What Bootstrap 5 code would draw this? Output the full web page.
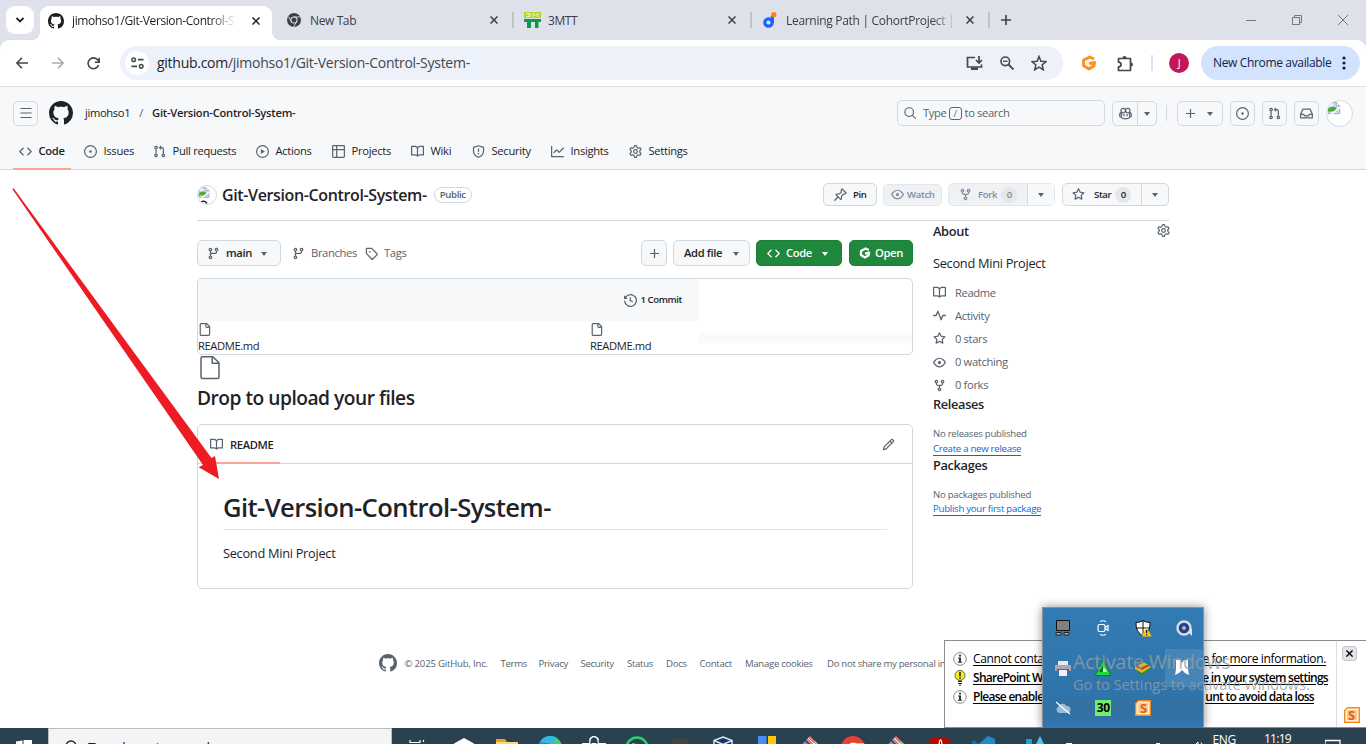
<!DOCTYPE html>
<html lang="en">
<head>
<meta charset="utf-8">
<title>jimohso1/Git-Version-Control-System-</title>
<link rel="stylesheet" href="https://cdn.jsdelivr.net/npm/bootstrap@5.3.0/dist/css/bootstrap.min.css">
<style>
:root{--gh-line:#d1d9e0;--gh-fg:#1f2328;--gh-muted:#59636e}
body{width:1366px;height:744px;overflow:hidden;position:relative;background:#fff;color:var(--gh-fg);font-family:"Open Sans","Noto Sans",sans-serif;font-size:11.2px;line-height:16px;letter-spacing:-.35px;white-space:nowrap}
svg{display:block;flex:none;fill:currentColor}
.ln{fill:none}
.ln:not([stroke]){stroke:currentColor}
.i13{width:13px;height:13px}
.sb{font-weight:600}
/* browser chrome */
.tabstrip{height:40px;background:#dee1e9;color:#3c4043;font-size:12px;letter-spacing:-.39px}
.tabmenu{width:28px;height:28px;margin:6px 6px 0;background:#fff;border-radius:9px;color:#1f1f1f}
.tab-on{width:232px;height:34px;margin-top:6px;background:#fff;border-radius:9px 9px 0 0;padding:0 12px 5px 8px;color:#1f1f1f;position:relative}
.tab-on:before,.tab-on:after{content:"";position:absolute;bottom:0;width:9px;height:9px}
.tab-on:before{left:-9px;background:radial-gradient(circle at 0 0,transparent 9px,#fff 9.5px)}
.tab-on:after{right:-9px;background:radial-gradient(circle at 100% 0,transparent 9px,#fff 9.5px)}
.tab-off{width:238px;padding:0 12px 0 15px}
.tab-mid{width:236px;padding:0 14px 0 10px}
.sep{width:2px;height:16px;background:#c2c2c5}
.tabtitle{overflow:hidden;flex:1}
.fade-end{-webkit-mask-image:linear-gradient(90deg,#000 85%,transparent);mask-image:linear-gradient(90deg,#000 85%,transparent)}
.toolbar{height:47px;background:#fff;border-bottom:1px solid #dfe2e0;color:#444746;border-radius:9px 9px 0 0}
.tabstrip-wrap{background:#dee1e9}
.omnibox{width:943px;height:34px;border-radius:17px;background:#ecf1fa;padding:0 16px 0 5px;font-size:14px;letter-spacing:-.27px;color:#44474c}
.siteinfo{width:24px;height:24px;background:#fff;border-radius:50%}
.update{width:159px;height:34px;border-radius:17px;background:#d3e3fd;color:#0b2350;font-size:12px;padding:0 14px 0 12px;letter-spacing:-.35px}
.avatar-j{width:20px;height:20px;border-radius:50%;background:#c2185b;color:#fff;font-size:11px}
/* site header */
.ghhead{height:83px;background:#f6f8fa;border-bottom:1px solid var(--gh-line)}
.ghrow{height:26px;margin-top:13px;padding:0 13px}
.sq{height:25px;border:1px solid var(--gh-line);border-radius:5px;color:var(--gh-muted);display:flex;align-items:center;justify-content:center}
.sq25{width:25px}
.searchbox{width:208px;height:26px;border:1px solid var(--gh-line);border-radius:5px;padding:0 6px;color:var(--gh-muted)}
.slash{border:1px solid var(--gh-muted);border-radius:3px;width:13px;height:13px;line-height:11px;font-size:9.6px;text-align:center;margin:0 3px 0 2px}
.caret{width:0;height:0;border:3.2px solid transparent;border-top:4px solid var(--gh-muted);border-bottom:0;position:relative;top:.5px}
.avatar-b{border-radius:50%;border:1px solid var(--gh-line);background:#fff;overflow:hidden}
.ghnav{display:grid;grid-template-columns:65px 69px 103px 76px 79px 61px 79px 78px 80px;height:38px;margin:6px 0 0 19px;align-items:center;letter-spacing:-.3px}
.ghnav>a{display:flex;align-items:center;gap:6.5px;height:38px;color:var(--gh-fg);text-decoration:none}
.ghnav svg{color:var(--gh-muted)}
.ghnav .on{width:58px;margin-left:-6px;padding-left:6px;border-bottom:2px solid #fda393;border-top:2px solid transparent;font-weight:600}
/* repository */
.repo{width:972px;margin-left:197px}
.titlebar{height:51px;border-bottom:1px solid var(--gh-line);padding-bottom:1px}
.titletext{font-size:16px;font-weight:600;letter-spacing:-.37px}
.pill{border:1px solid var(--gh-line);border-radius:9px;font-size:9.6px;font-weight:600;color:var(--gh-muted);height:16px;line-height:14px;width:38px;text-align:center}
.b{border:1px solid var(--gh-line);border-radius:5px;background:#f6f8fa;display:flex;align-items:center;font-weight:600}
.b svg{color:var(--gh-muted)}
.b.sm{height:23px;font-size:9.6px}
.b.dim{color:#818b98;background:#eff2f5;border-color:#e3e7eb}
.b.dim svg{color:#818b98}
.b.md{height:26px}
.b.green{background:#1f883d;border-color:#1a7f37;color:#fff}
.b.green svg{color:#fff}
.green .caret{border-top-color:#fff}
.count{width:16px;height:16px;line-height:16px;text-align:center;border-radius:8px;background:#e4e7eb;margin-left:4px}
.split{border-left:1px solid var(--gh-line);height:100%;width:27px;display:flex;align-items:center;justify-content:center}
.leftcol{width:716px}
.rightcol{width:236px}
.filebox{height:77px;border:1px solid var(--gh-line);border-radius:5px;overflow:hidden;margin-top:12px;display:grid;grid-template-columns:392px 109px 1fr;grid-template-rows:42px 34px;letter-spacing:-.39px}
.filehead{grid-column:1/3;background:#f6f8fa;border-radius:0 5px 0 0}
.skel{height:10px;background:#f9fafb;margin-top:12px}
.h-drop{font-size:19.2px;line-height:26px;font-weight:600;letter-spacing:-.5px;margin:5px 0 0}
.readme{height:165px;border:1px solid var(--gh-line);border-radius:5px;margin-top:13px}
.readme-bar{height:39px;border-bottom:1px solid var(--gh-line);padding:0 17px 0 12px}
.readme-tab{height:40px;border-bottom:2px solid #fda393;width:70px;padding-top:3px}
.readme h1{font-size:25.6px;line-height:32px;font-weight:600;letter-spacing:-.58px;border-bottom:1px solid #dfe4e9;margin:28px 25px 0;height:38px}
.big{font-size:12.8px;letter-spacing:-.29px}
.muted{color:var(--gh-muted)}
.tiny{font-size:9.6px;line-height:14px;letter-spacing:-.26px}
.side-h{font-size:12.8px;font-weight:600;line-height:18px;margin:0}
.side-l{display:flex;align-items:center;gap:9px;height:23px;color:var(--gh-muted)}
.ul{color:#0969da;text-decoration:none;border-bottom:1px solid #0969da;display:inline-block;height:14px}
.foot{position:absolute;left:379px;top:654px;height:18px;font-size:9.6px;letter-spacing:-.3px;color:var(--gh-muted);display:grid;grid-template-columns:25.5px 96px 38px 42px 46.5px 39px 33.5px 45.5px 82px 130px;align-items:center}
.foot span{padding-top:1px}
.note{position:absolute;left:944px;top:640px;width:423px;height:88px;background:#fff;border:1px solid #8c8c8c;font-size:12px;color:#000}
.note .ntext{width:392px;border-right:1px solid #ddd;padding:8px 7px 0 8px}
.nrow{height:19px;display:flex;align-items:center;gap:6px}
.nrow>div{display:flex;justify-content:space-between;text-decoration:underline;text-underline-offset:2px}
.nrow .sb{letter-spacing:-.72px}
.w1{width:353px}.w2{width:355px}.w3{width:341px}
.nclose{width:15px;height:15px;margin:5px 0 0 5px;background:#e3e4e8;border:1px solid #c5c6cc;border-radius:3px}
.tray{position:absolute;left:1042px;top:607px;width:162px;height:121px;background:linear-gradient(#327bb4,#2f75ab 70%,#336f9f 85%,#3079b2);border:1px solid #8a9298;border-bottom:0;box-shadow:0 0 9px rgba(0,0,0,.45);display:grid;grid-template-columns:repeat(4,40.2px);grid-template-rows:repeat(3,40px);place-items:center}
.tray .hot{background:#4585b8;width:38px;height:38px;display:grid;place-items:center}
.n30{background:#6ef06e;color:#000;font-weight:700;width:16px;height:16px;line-height:16px;text-align:center;font-size:12px}
.wm{position:absolute;left:1073px;top:651px;color:rgba(150,158,164,.8)}
.wm1{font-size:19.5px;line-height:22px;letter-spacing:-.16px}
.wm2{font-size:14.6px;line-height:22px;letter-spacing:-.07px}
.task{position:absolute;left:0;top:728px;width:1366px;height:16px;overflow:hidden;background:#2a4150;color:#fff}
.tsearch{width:344px;height:40px;background:#f3f4f5;border:1px solid #bcbcbc;color:#222;font-size:14px;letter-spacing:-.1px;padding:11px 0 0 15px;gap:10px;margin-right:7px}
.ticons{display:grid;grid-template-columns:repeat(15,43.25px);justify-items:center;padding-top:8px}
.clock{font-size:12px}
.arrow{position:absolute;left:0;top:180px}
</style>
</head>
<body>
<svg class="d-none">
<symbol id="gh" viewBox="0 0 16 16"><path d="M8 0c4.42 0 8 3.58 8 8a8.013 8.013 0 0 1-5.45 7.59c-.4.08-.55-.17-.55-.38 0-.27.01-1.13.01-2.2 0-.75-.25-1.23-.54-1.48 1.78-.2 3.65-.88 3.65-3.95 0-.88-.31-1.59-.82-2.15.08-.2.36-1.02-.08-2.12 0 0-.67-.22-2.2.82-.64-.18-1.32-.27-2-.27-.68 0-1.36.09-2 .27-1.53-1.03-2.2-.82-2.2-.82-.44 1.1-.16 1.92-.08 2.12-.51.56-.82 1.28-.82 2.15 0 3.06 1.86 3.75 3.64 3.95-.23.2-.44.55-.51 1.07-.46.21-1.61.55-2.33-.66-.15-.24-.6-.83-1.23-.82-.67.01-.27.38.01.53.34.19.73.9.82 1.13.16.45.68 1.31 2.69.94 0 .67.01 1.3.01 1.49 0 .21-.15.45-.55.38A7.995 7.995 0 0 1 0 8c0-4.42 3.58-8 8-8Z"/></symbol>
<symbol id="code" viewBox="0 0 16 16"><path d="m11.28 3.22 4.25 4.25a.75.75 0 0 1 0 1.06l-4.25 4.25a.749.749 0 0 1-1.275-.326.749.749 0 0 1 .215-.734L13.94 8l-3.72-3.72a.749.749 0 0 1 .326-1.275.749.749 0 0 1 .734.215Zm-6.56 0a.751.751 0 0 1 1.042.018.751.751 0 0 1 .018 1.042L2.06 8l3.72 3.72a.749.749 0 0 1-.326 1.275.749.749 0 0 1-.734-.215L.47 8.53a.75.75 0 0 1 0-1.06Z"/></symbol>
<symbol id="issue" viewBox="0 0 16 16"><path d="M8 9.5a1.5 1.5 0 1 0 0-3 1.5 1.5 0 0 0 0 3Z"/><path d="M8 0a8 8 0 1 1 0 16A8 8 0 0 1 8 0ZM1.5 8a6.5 6.5 0 1 0 13 0 6.5 6.5 0 0 0-13 0Z"/></symbol>
<symbol id="pr" viewBox="0 0 16 16"><path d="M1.5 3.25a2.25 2.25 0 1 1 3 2.122v5.256a2.251 2.251 0 1 1-1.5 0V5.372A2.25 2.25 0 0 1 1.5 3.25Zm5.677-.177L9.573.677A.25.25 0 0 1 10 .854V2.5h1A2.5 2.5 0 0 1 13.5 5v5.628a2.251 2.251 0 1 1-1.5 0V5a1 1 0 0 0-1-1h-1v1.646a.25.25 0 0 1-.427.177L7.177 3.427a.25.25 0 0 1 0-.354ZM3.75 2.5a.75.75 0 1 0 0 1.5.75.75 0 0 0 0-1.5Zm0 9.5a.75.75 0 1 0 0 1.5.75.75 0 0 0 0-1.5Zm8.25.75a.75.75 0 1 0 1.5 0 .75.75 0 0 0-1.5 0Z"/></symbol>
<symbol id="play" viewBox="0 0 16 16"><path d="M8 0a8 8 0 1 1 0 16A8 8 0 0 1 8 0ZM1.5 8a6.5 6.5 0 1 0 13 0 6.5 6.5 0 0 0-13 0Zm4.879-2.773 4.264 2.559a.25.25 0 0 1 0 .428l-4.264 2.559A.25.25 0 0 1 6 10.559V5.442a.25.25 0 0 1 .379-.215Z"/></symbol>
<symbol id="tbl" viewBox="0 0 16 16"><path d="M0 1.75C0 .784.784 0 1.75 0h12.5C15.216 0 16 .784 16 1.75v12.5A1.75 1.75 0 0 1 14.25 16H1.75A1.75 1.75 0 0 1 0 14.25ZM6.5 6.5v8h7.75a.25.25 0 0 0 .25-.25V6.5Zm8-1.5V1.75a.25.25 0 0 0-.25-.25H6.5V5Zm-13 1.5v7.75c0 .138.112.25.25.25H5v-8ZM5 5V1.5H1.75a.25.25 0 0 0-.25.25V5Z"/></symbol>
<symbol id="book" viewBox="0 0 16 16"><path d="M0 1.75A.75.75 0 0 1 .75 1h4.253c1.227 0 2.317.59 3 1.501A3.743 3.743 0 0 1 11.006 1h4.245a.75.75 0 0 1 .75.75v10.5a.75.75 0 0 1-.75.75h-4.507a2.25 2.25 0 0 0-1.591.659l-.622.621a.75.75 0 0 1-1.06 0l-.622-.621A2.25 2.25 0 0 0 5.258 13H.75a.75.75 0 0 1-.75-.75Zm7.251 10.324.004-5.073-.002-2.253A2.25 2.25 0 0 0 5.003 2.5H1.5v9h3.757a3.75 3.75 0 0 1 1.994.574ZM8.755 4.75l-.004 7.322a3.752 3.752 0 0 1 1.992-.572H14.5v-9h-3.495a2.25 2.25 0 0 0-2.25 2.25Z"/></symbol>
<symbol id="shield" viewBox="0 0 16 16"><path fill="none" stroke="currentColor" stroke-width="1.5" stroke-linejoin="round" d="M8 .9 14.2 2.9V7c0 3.900-2.200 6.600-6.200 8.100C4 13.600 1.800 10.900 1.800 7V2.900Z"/><path d="M7.250 4.200h1.500v4.300h-1.500z"/><circle cx="8" cy="10.700" r="1"/></symbol>
<symbol id="graph" viewBox="0 0 16 16"><path d="M1.5 1.75V13.5h13.75a.75.75 0 0 1 0 1.5H.75a.75.75 0 0 1-.75-.75V1.75a.75.75 0 0 1 1.5 0Zm14.28 2.53-5.25 5.25a.75.75 0 0 1-1.06 0L7 7.06 4.28 9.78a.751.751 0 0 1-1.042-.018.751.751 0 0 1-.018-1.042l3.25-3.25a.75.75 0 0 1 1.06 0L10 7.94l4.72-4.72a.751.751 0 0 1 1.042.018.751.751 0 0 1 .018 1.042Z"/></symbol>
<symbol id="gear" viewBox="0 0 16 16"><path d="M8 0a8.2 8.2 0 0 1 .701.031C9.444.095 9.99.645 10.16 1.29l.288 1.107c.018.066.079.158.212.224.231.114.454.243.668.386.123.082.233.09.299.071l1.103-.303c.644-.176 1.392.021 1.82.63.27.385.506.792.704 1.218.315.675.111 1.422-.364 1.891l-.814.806c-.049.048-.098.147-.088.294.016.257.016.515 0 .772-.01.147.038.246.088.294l.814.806c.475.469.679 1.216.364 1.891a7.977 7.977 0 0 1-.704 1.217c-.428.61-1.176.807-1.82.63l-1.102-.302c-.067-.019-.177-.011-.3.071a5.909 5.909 0 0 1-.668.386c-.133.066-.194.158-.211.224l-.29 1.106c-.168.646-.715 1.196-1.458 1.26a8.006 8.006 0 0 1-1.402 0c-.743-.064-1.289-.614-1.458-1.26l-.289-1.106c-.018-.066-.079-.158-.212-.224a5.738 5.738 0 0 1-.668-.386c-.123-.082-.233-.09-.299-.071l-1.103.303c-.644.176-1.392-.021-1.82-.63a8.12 8.12 0 0 1-.704-1.218c-.315-.675-.111-1.422.363-1.891l.815-.806c.05-.048.098-.147.088-.294a6.214 6.214 0 0 1 0-.772c.01-.147-.038-.246-.088-.294l-.815-.806C.635 6.045.431 5.298.746 4.623a7.92 7.92 0 0 1 .704-1.217c.428-.61 1.176-.807 1.82-.63l1.102.302c.067.019.177.011.3-.071.214-.143.437-.272.668-.386.133-.066.194-.158.211-.224l.29-1.106C6.009.645 6.556.095 7.299.03 7.53.01 7.764 0 8 0Zm-.571 1.525c-.036.003-.108.036-.137.146l-.289 1.105c-.147.561-.549.967-.998 1.189-.173.086-.34.183-.5.29-.417.278-.97.423-1.529.27l-1.103-.303c-.109-.03-.175.016-.195.045-.22.312-.412.644-.573.99-.014.031-.021.11.059.19l.815.806c.411.406.562.957.53 1.456a4.709 4.709 0 0 0 0 .582c.032.499-.119 1.05-.53 1.456l-.815.806c-.081.08-.073.159-.059.19.162.346.353.677.573.989.02.03.085.076.195.046l1.102-.303c.56-.153 1.113-.008 1.53.27.161.107.328.204.501.29.447.222.85.629.997 1.189l.289 1.105c.029.109.101.143.137.146a6.6 6.6 0 0 0 1.142 0c.036-.003.108-.036.137-.146l.289-1.105c.147-.561.549-.967.998-1.189.173-.086.34-.183.5-.29.417-.278.97-.423 1.529-.27l1.103.303c.109.029.175-.016.195-.045.22-.313.411-.644.573-.99.014-.031.021-.11-.059-.19l-.815-.806c-.411-.406-.562-.957-.53-1.456a4.709 4.709 0 0 0 0-.582c-.032-.499.119-1.05.53-1.456l.815-.806c.081-.08.073-.159.059-.19a6.464 6.464 0 0 0-.573-.989c-.02-.03-.085-.076-.195-.046l-1.102.303c-.56.153-1.113.008-1.53-.27a4.44 4.44 0 0 0-.501-.29c-.447-.222-.85-.629-.997-1.189l-.289-1.105c-.029-.11-.101-.143-.137-.146a6.6 6.6 0 0 0-1.142 0ZM11 8a3 3 0 1 1-6 0 3 3 0 0 1 6 0ZM9.5 8a1.5 1.5 0 1 0-3.001.001A1.5 1.5 0 0 0 9.5 8Z"/></symbol>
<symbol id="branch" viewBox="0 0 16 16"><path d="M9.5 3.25a2.25 2.25 0 1 1 3 2.122V6A2.5 2.5 0 0 1 10 8.5H6a1 1 0 0 0-1 1v1.128a2.251 2.251 0 1 1-1.5 0V5.372a2.25 2.25 0 1 1 1.5 0v1.836A2.493 2.493 0 0 1 6 7h4a1 1 0 0 0 1-1v-.628A2.25 2.25 0 0 1 9.5 3.25Zm-6 0a.75.75 0 1 0 1.5 0 .75.75 0 0 0-1.5 0Zm8.25-.75a.75.75 0 1 0 0 1.5.75.75 0 0 0 0-1.5ZM4.25 12a.75.75 0 1 0 0 1.5.75.75 0 0 0 0-1.5Z"/></symbol>
<symbol id="fork" viewBox="0 0 16 16"><path d="M5 5.372v.878c0 .414.336.75.75.75h4.5a.75.75 0 0 0 .75-.75v-.878a2.25 2.25 0 1 1 1.5 0v.878a2.25 2.25 0 0 1-2.25 2.25h-1.5v2.128a2.251 2.251 0 1 1-1.5 0V8.5h-1.5A2.25 2.25 0 0 1 3.5 6.25v-.878a2.25 2.25 0 1 1 1.5 0ZM5 3.25a.75.75 0 1 0-1.5 0 .75.75 0 0 0 1.5 0Zm6.75.75a.75.75 0 1 0 0-1.5.75.75 0 0 0 0 1.5Zm-3 8.75a.75.75 0 1 0-1.5 0 .75.75 0 0 0 1.5 0Z"/></symbol>
<symbol id="tag" viewBox="0 0 16 16"><path d="M1 7.775V2.75C1 1.784 1.784 1 2.75 1h5.025c.464 0 .91.184 1.238.513l6.25 6.25a1.75 1.75 0 0 1 0 2.474l-5.026 5.026a1.75 1.75 0 0 1-2.474 0l-6.25-6.25A1.752 1.752 0 0 1 1 7.775Zm1.5 0c0 .066.026.13.073.177l6.25 6.25a.25.25 0 0 0 .354 0l5.025-5.025a.25.25 0 0 0 0-.354l-6.25-6.25a.25.25 0 0 0-.177-.073H2.75a.25.25 0 0 0-.25.25ZM6 5a1 1 0 1 1 0 2 1 1 0 0 1 0-2Z"/></symbol>
<symbol id="star" viewBox="0 0 16 16"><path d="M8 .25a.75.75 0 0 1 .673.418l1.882 3.815 4.21.612a.75.75 0 0 1 .416 1.279l-3.046 2.97.719 4.192a.751.751 0 0 1-1.088.791L8 12.347l-3.766 1.98a.75.75 0 0 1-1.088-.79l.72-4.194L.818 6.374a.75.75 0 0 1 .416-1.28l4.21-.611L7.327.668A.75.75 0 0 1 8 .25Zm0 2.445L6.615 5.5a.75.75 0 0 1-.564.41l-3.097.45 2.24 2.184a.75.75 0 0 1 .216.664l-.528 3.084 2.769-1.456a.75.75 0 0 1 .698 0l2.77 1.456-.53-3.084a.75.75 0 0 1 .216-.664l2.24-2.183-3.096-.45a.75.75 0 0 1-.564-.41L8 2.694Z"/></symbol>
<symbol id="eye" viewBox="0 0 16 16"><path d="M8 2c1.981 0 3.671.992 4.933 2.078 1.27 1.091 2.187 2.345 2.637 3.023a1.62 1.62 0 0 1 0 1.798c-.45.678-1.367 1.932-2.637 3.023C11.67 13.008 9.981 14 8 14c-1.981 0-3.671-.992-4.933-2.078C1.797 10.83.88 9.576.43 8.898a1.62 1.62 0 0 1 0-1.798c.45-.677 1.367-1.931 2.637-3.022C4.33 2.992 6.019 2 8 2ZM1.679 7.932a.12.12 0 0 0 0 .136c.411.622 1.241 1.75 2.366 2.717C5.176 11.758 6.527 12.5 8 12.5c1.473 0 2.825-.742 3.955-1.715 1.124-.967 1.954-2.096 2.366-2.717a.12.12 0 0 0 0-.136c-.412-.621-1.242-1.75-2.366-2.717C10.824 4.242 9.473 3.5 8 3.5c-1.473 0-2.825.742-3.955 1.715-1.124.967-1.954 2.096-2.366 2.717ZM8 10a2 2 0 1 1-.001-3.999A2 2 0 0 1 8 10Z"/></symbol>
<symbol id="file" viewBox="0 0 16 16"><path d="M2 1.75C2 .784 2.784 0 3.75 0h6.586c.464 0 .909.184 1.237.513l2.914 2.914c.329.328.513.773.513 1.237v9.586A1.75 1.75 0 0 1 13.25 16h-9.5A1.75 1.75 0 0 1 2 14.25Zm1.75-.25a.25.25 0 0 0-.25.25v12.5c0 .138.112.25.25.25h9.5a.25.25 0 0 0 .25-.25V6h-2.75A1.75 1.75 0 0 1 9 4.25V1.5Zm6.75.062V4.25c0 .138.112.25.25.25h2.688l-.011-.013-2.914-2.914-.013-.011Z"/></symbol>
<symbol id="pencil" viewBox="0 0 16 16"><path d="M11.013 1.427a1.75 1.75 0 0 1 2.474 0l1.086 1.086a1.75 1.75 0 0 1 0 2.474l-8.61 8.61c-.21.21-.47.364-.756.445l-3.251.93a.75.75 0 0 1-.927-.928l.929-3.25c.081-.286.235-.547.445-.758l8.61-8.61Zm.176 4.823L9.75 4.81l-6.286 6.287a.253.253 0 0 0-.064.108l-.558 1.953 1.953-.558a.253.253 0 0 0 .108-.064Zm1.238-3.763a.25.25 0 0 0-.354 0L10.811 3.75l1.439 1.44 1.263-1.263a.25.25 0 0 0 0-.354Z"/></symbol>
<symbol id="history" viewBox="0 0 16 16"><path d="m.427 1.927 1.215 1.215a8.002 8.002 0 1 1-1.6 5.685.75.75 0 1 1 1.493-.154 6.5 6.5 0 1 0 1.18-4.458l1.358 1.358A.25.25 0 0 1 3.896 6H.25A.25.25 0 0 1 0 5.75V2.104a.25.25 0 0 1 .427-.177ZM7.75 4a.75.75 0 0 1 .75.75v2.992l2.028.812a.75.75 0 0 1-.557 1.392l-2.5-1A.751.751 0 0 1 7 8.25v-3.5A.75.75 0 0 1 7.75 4Z"/></symbol>
<symbol id="pulse" viewBox="0 0 16 16"><path fill="none" stroke="currentColor" stroke-width="1.6" stroke-linejoin="round" stroke-linecap="round" d="M.8 8h3L6 2.800l4 10.400L12 8h3.200"/></symbol>
<symbol id="pin" viewBox="0 0 16 16"><path fill="none" stroke="currentColor" stroke-width="1.5" stroke-linejoin="round" stroke-linecap="round" d="M.9 15.100 5.200 10.800M9.900 1.100l5 5-1.200 1.100-2.500.6-1.900 2-.3 3.600-.9.6L2.600 8.500l.4-.9 3.700-.4 2-1.900.4-2.900Z"/></symbol>
<symbol id="copilot" viewBox="0 0 16 16"><path fill="none" stroke="currentColor" stroke-width="1.5" d="M8 3.200C7.400 1.300 3.200.9 2.700 3c-.3 1.600-.2 3.600 1.100 4 2 .5 4.200 0 4.200-3.800 0 3.800 2.200 4.300 4.200 3.800 1.300-.4 1.400-2.400 1.100-4C12.800.9 8.600 1.300 8 3.200M2.400 6.500C1.200 7.300.9 8.200.9 9.200v2.300c2 2 4.500 3 7.100 3s5.100-1 7.100-3V9.200c0-1-.3-1.900-1.500-2.700M3 7v5M13 7v5"/><path d="M5.300 8.500h1.500v3H5.300zM9.200 8.500h1.500v3H9.200z"/></symbol>
<symbol id="inbox" viewBox="0 0 16 16"><path fill="none" stroke="currentColor" stroke-width="1.500" stroke-linejoin="round" d="M3.500 2.700h9L15.200 9v4.300H.8V9ZM.8 9h3.700l1.300 2h4.400l1.300-2h3.700"/></symbol>
<symbol id="mag" viewBox="0 0 16 16"><path fill="none" stroke="currentColor" stroke-width="1.500" stroke-linecap="round" d="M6.900 1a5.800 5.800 0 1 0 0 11.600A5.800 5.800 0 1 0 6.900 1M11.200 11.200l4 4"/></symbol>
<symbol id="x" viewBox="0 0 8 8"><path fill="none" stroke="currentColor" stroke-width="1.500" d="m.5.5 7 7m0-7-7 7"/></symbol>
<symbol id="broken" viewBox="0 0 16 16"><path fill="#c9dcf8" stroke="#9b9b9b" d="M1.500 1.500h9l4 4v9h-13z"/><path fill="#fff" stroke="#9b9b9b" d="M10.500 1.500v4h4"/><path fill="#4fa834" d="M1 12c0-4 3-5.500 6-5.500S12 9 12 12z"/><circle cx="5" cy="4.500" r="1.500" fill="#fff"/><path stroke="#fff" stroke-width="2" d="m4 16 11-9"/></symbol>
<symbol id="gp" viewBox="0 0 16 16"><path fill="none" stroke="currentColor" stroke-width="3" stroke-linejoin="round" d="M13 4 8.800 2 2.600 5.200v5.600L8 13.900l4.900-3L13.500 7.500 8 8.800"/></symbol>
<symbol id="shot" viewBox="0 0 16 16"><path fill="#fff1de" stroke="#f28c1e" stroke-width="1.400" d="M3.500.7h11.800v14.600H.7V3.500z"/><path fill="#f79a2e" d="M3 3h10v10H3z" opacity=".45"/></symbol>
<symbol id="info" viewBox="0 0 14 14"><circle cx="7" cy="7" r="6.300" fill="#fff" stroke="#888"/><path fill="#333" d="M6 2.800h2v1.800H6zM5 5.500h3v4.200h1.200v1.100H4.800V9.700H6V6.600H5z"/></symbol>
</svg>

<!-- tab strip -->
<div class="tabstrip d-flex align-items-center">
  <div class="tabmenu d-flex align-items-center justify-content-center align-self-start"><svg width="8" height="6" viewBox="0 0 8 6"><path class="ln" stroke-width="1.800" d="m.5 1 3.500 3.500L7.500 1"/></svg></div>
  <div class="tab-on d-flex align-items-center">
    <svg width="16" height="16"><use href="#gh"/></svg>
    <span class="tabtitle fade-end ms-2 me-3">jimohso1/Git-Version-Control-S</span>
    <svg width="8" height="8"><use href="#x"/></svg>
  </div>
  <div class="tab-off d-flex align-items-center">
    <svg width="14" height="14" viewBox="0 0 16 16"><circle cx="8" cy="8" r="8"/><circle cx="8" cy="8" r="3.500" fill="none" stroke="#dee1e9" stroke-width="1.200"/><path stroke="#dee1e9" d="M8 4.500h7M5 9.800 1.500 4M11 9.800 7.500 16"/></svg>
    <span class="tabtitle" style="margin-left:9px;padding-top:1px">New Tab</span><svg width="8" height="8"><use href="#x"/></svg>
  </div>
  <div class="sep" style="margin-left:2px"></div>
  <div class="tab-mid d-flex align-items-center">
    <svg width="17" height="16" viewBox="0 0 17 16"><path fill="#b7d433" d="M0 0h17v6H0z"/><path fill="none" stroke="#eaf5b0" d="M2 1.500h4v3H2M4 3h2M9 5.500v-4l2.500 2 2.500-2v4"/><path fill="#0b9a4c" d="M0 7h17v3h-2.500v6H11v-6H7v6H3v-6H0z"/></svg>
    <span class="tabtitle" style="margin-left:7px;padding-top:1px">3MTT</span><svg width="8" height="8"><use href="#x"/></svg>
  </div>
  <div class="sep"></div>
  <div class="tab-mid d-flex align-items-center">
    <svg width="14" height="16" viewBox="0 0 14 16" style="margin-left:1px"><circle cx="5.500" cy="10.500" r="3.700" fill="none" stroke="#1d63ff" stroke-width="3.200"/><path fill="#1d63ff" d="M7.500 4H11v7H9z"/><circle cx="10.800" cy="2.800" r="2.700" fill="#ff7d27"/></svg>
    <span class="tabtitle fade-end me-2" style="margin-left:9px;padding-top:1px;letter-spacing:-.3px">Learning Path | CohortProject | D</span><svg width="8" height="8"><use href="#x"/></svg>
  </div>
  <div class="sep"></div>
  <svg style="margin-left:11px" width="10" height="10" viewBox="0 0 10 10"><path class="ln" stroke-width="1.600" d="M5 0v10M0 5h10"/></svg>
  <svg class="ms-auto" width="10" height="10" viewBox="0 0 10 10"><path class="ln" stroke="#777" d="M0 5.500h10"/></svg>
  <svg width="10" height="10" viewBox="0 0 10 10" style="margin:0 36px"><path class="ln" stroke="#777" d="M.5 2.500h7v7h-7zM2.500 2.500v-2h7v7h-2"/></svg>
  <svg width="10" height="10" viewBox="0 0 10 10" style="margin-right:18px"><path class="ln" stroke="#777" d="m0 0 10 10M10 0 0 10"/></svg>
</div>
<!-- browser toolbar -->
<div class="tabstrip-wrap"><div class="toolbar d-flex align-items-center">
  <svg width="12" height="12" viewBox="0 0 12 12" style="margin-left:16px"><path class="ln" stroke-width="1.600" d="M12 6H1.200M6 .8.900 6 6 11.200"/></svg>
  <svg width="12" height="12" viewBox="0 0 12 12" style="margin:0 23px 0 24px;color:#a9abaa"><path class="ln" stroke-width="1.600" d="M0 6h10.800M6 .8 11.100 6 6 11.200"/></svg>
  <svg width="13" height="13" viewBox="0 0 13 13"><path class="ln" stroke-width="1.600" d="M11.600 8A5.400 5.400 0 1 1 10.800 3L12 4.500M12.200.8v4.400H7.800"/></svg>
  <div class="omnibox d-flex align-items-center" style="margin-left:20px">
    <span class="siteinfo d-flex align-items-center justify-content-center"><svg width="13" height="12" viewBox="0 0 13 12"><path class="ln" stroke-width="1.700" d="M7 2.700h5.500M.5 9.300H6"/><circle class="ln" stroke-width="1.500" cx="2.700" cy="2.700" r="1.800"/><circle class="ln" stroke-width="1.500" cx="10.200" cy="9.300" r="1.800"/></svg></span>
    <span class="ms-2"><span class="text-dark">github.com</span>/jimohso1/Git-Version-Control-System-</span>
    <svg class="ms-auto" width="17" height="15" viewBox="0 0 17 15"><path class="ln" stroke-width="1.700" d="M9 1.500H1.500v9.500h14V8.500M13 0v6.500M10 4l3 3 3-3"/><path d="M5 11.500h7V14H5z"/></svg>
    <svg width="14" height="14" viewBox="0 0 14 14" style="margin:0 17px"><circle class="ln" stroke-width="1.600" cx="5.300" cy="5.300" r="4.300"/><path class="ln" stroke-width="1.800" d="m8.500 8.500 5 5"/><path class="ln" stroke-width="1.300" d="M3 5.300h4.600"/></svg>
    <svg width="16" height="16" viewBox="0 0 16 16"><path class="ln" stroke-width="1.500" d="m8 1.500 1.900 4.700 5 .4-3.800 3.300 1.200 4.900L8 12.200l-4.300 2.600 1.200-4.900L1.100 6.600l5-.4z"/></svg>
  </div>
  <svg width="16" height="16" style="margin-left:18px;color:#fc931e"><use href="#gp"/></svg>
  <svg width="17" height="17" viewBox="0 0 17 17" style="margin-left:20px"><path class="ln" stroke-width="1.700" stroke-linejoin="round" d="M1.500 3.500h12v12h-12v-3.700c3.500 0 3.500-4.600 0-4.600z"/><path d="M5.500 3a2 2 0 0 1 4 0zM14 7.500a2 2 0 0 1 0 4z"/></svg>
  <div style="width:2px;height:16px;background:#d3e3fd;margin:0 16px 0 17px"></div>
  <span class="avatar-j d-flex align-items-center justify-content-center">J</span>
  <div class="update d-flex align-items-center justify-content-between" style="margin-left:12px"><span>New Chrome available</span><svg width="4" height="14" viewBox="0 0 4 14"><circle cx="2" cy="2" r="1.600"/><circle cx="2" cy="7" r="1.600"/><circle cx="2" cy="12" r="1.600"/></svg></div>
</div></div>

<!-- site header -->
<header class="ghhead d-flex flex-column">
  <div class="ghrow d-flex align-items-center">
    <span class="sq sq25"><svg width="12" height="12" viewBox="0 0 12 12"><path class="ln" stroke-width="1.200" d="M.5 1.500h11M.5 6h11M.5 10.500h11"/></svg></span>
    <svg width="24" height="24" style="margin:0 12px 0 11px"><use href="#gh"/></svg>
    <span>jimohso1</span><span class="muted" style="margin:0 9px">/</span><span class="sb" style="letter-spacing:-.25px">Git-Version-Control-System-</span>
    <div class="searchbox d-flex align-items-center ms-auto"><svg width="12" height="12"><use href="#mag"/></svg><span style="padding-left:7px">Type</span><span class="slash">/</span><span>to search</span></div>
    <span class="sq" style="margin-left:7px;width:45px"><svg class="i13 mx-auto"><use href="#copilot"/></svg><span style="border-left:1px solid #d1d9e0;height:23px;width:19px" class="d-flex align-items-center justify-content-center"><i class="caret"></i></span></span>
    <span style="width:1px;height:16px;background:#d1d9e0;margin:0 10px 0 9px"></span>
    <span class="sq" style="width:46px;gap:12px;padding-right:2px"><svg width="9" height="9" viewBox="0 0 9 9"><path class="ln" stroke-width="1.200" d="M4.500 0v9M0 4.500h9"/></svg><i class="caret" style="top:1px"></i></span>
    <span class="sq sq25" style="margin-left:7px"><svg class="i13"><use href="#issue"/></svg></span>
    <span class="sq sq25" style="margin-left:7px"><svg class="i13"><use href="#pr"/></svg></span>
    <span class="sq sq25" style="margin-left:7px"><svg class="i13"><use href="#inbox"/></svg></span>
    <span class="avatar-b" style="width:27px;height:27px;margin-left:7px"><svg width="14" height="14"><use href="#broken"/></svg></span>
  </div>
  <nav class="ghnav">
    <a class="on"><svg class="i13"><use href="#code"/></svg>Code</a>
    <a><svg class="i13"><use href="#issue"/></svg>Issues</a>
    <a><svg class="i13"><use href="#pr"/></svg>Pull requests</a>
    <a><svg class="i13"><use href="#play"/></svg>Actions</a>
    <a><svg class="i13"><use href="#tbl"/></svg>Projects</a>
    <a><svg class="i13"><use href="#book"/></svg>Wiki</a>
    <a><svg class="i13"><use href="#shield"/></svg>Security</a>
    <a><svg class="i13"><use href="#graph"/></svg>Insights</a>
    <a><svg class="i13"><use href="#gear"/></svg>Settings</a>
  </nav>
</header>

<!-- repository -->
<main class="repo">
  <div class="titlebar d-flex align-items-center">
    <span class="avatar-b" style="width:20px;height:20px"><svg width="12" height="13"><use href="#broken"/></svg><svg width="8" height="6" viewBox="0 0 8 6" style="margin:1px 0 0 2px"><path class="ln" stroke="#222" stroke-width="1.400" d="M1 2.500Q4-.5 7 3.500"/></svg></span>
    <span class="titletext" style="margin-left:5px">Git-Version-Control-System-</span>
    <span class="pill" style="margin-left:7px">Public</span>
    <div class="ms-auto d-flex align-items-center">
      <span class="b sm" style="width:54px;padding-left:10px;gap:6px"><svg class="i13"><use href="#pin"/></svg>Pin</span>
      <span class="b sm dim" style="width:59px;height:22px;padding-left:7px;gap:3px;margin-left:6px"><svg class="i13"><use href="#eye"/></svg>Watch</span>
      <span class="b sm dim" style="margin-left:6px;width:107px;padding-left:10px"><svg class="i13"><use href="#fork"/></svg><span style="margin-left:6px">Fork</span><span class="count">0</span><span class="split ms-auto" style="background:#f6f8fa"><i class="caret"></i></span></span>
      <span class="b sm" style="margin-left:7px;width:107px;padding-left:9px"><svg class="i13"><use href="#star"/></svg><span style="margin-left:9px">Star</span><span class="count">0</span><span class="split ms-auto"><i class="caret"></i></span></span>
    </div>
  </div>
  <div class="d-flex justify-content-between">
    <div class="leftcol">
      <div class="d-flex align-items-center" style="margin-top:19px">
        <span class="b md" style="width:84px;padding-left:9px"><svg class="i13"><use href="#branch"/></svg><span style="margin-left:6px">main</span><i class="caret" style="margin-left:9px"></i></span>
        <svg class="i13 muted" style="margin-left:11px"><use href="#branch"/></svg><span class="muted" style="margin-left:6px;width:48px">Branches</span>
        <svg class="i13 muted" style="margin-left:6px"><use href="#tag"/></svg><span class="muted" style="margin-left:6px">Tags</span>
        <span class="b md ms-auto justify-content-center" style="width:26px"><svg width="9" height="9" viewBox="0 0 9 9"><path class="ln" stroke-width="1.200" d="M4.500 0v9M0 4.500h9"/></svg></span>
        <span class="b md" style="width:77px;margin-left:6px;padding-left:10px">Add file<i class="caret ms-auto" style="margin-right:10px"></i></span>
        <span class="b md green" style="width:86px;margin-left:6px;padding-left:10px"><svg class="i13"><use href="#code"/></svg><span style="margin-left:6px">Code</span><i class="caret ms-auto" style="margin-right:13px"></i></span>
        <span class="b md green" style="width:64px;margin-left:7px;padding-left:9px"><svg width="12" height="12"><use href="#gp"/></svg><span style="margin-left:4px">Open</span></span>
      </div>
      <div class="filebox">
        <div class="filehead d-flex align-items-center justify-content-end sb" style="padding-right:17px;font-size:9.600px"><svg class="i13 muted" style="margin-right:3px"><use href="#history"/></svg>1 Commit</div><div></div>
        <div><svg class="i13 muted" style="margin-top:2px"><use href="#file"/></svg><div style="margin-top:2px">README.md</div></div>
        <div><svg class="i13 muted" style="margin-top:2px"><use href="#file"/></svg><div style="margin-top:2px">README.md</div></div>
        <div class="skel"></div>
      </div>
      <svg class="muted" width="26" height="25" viewBox="0 0 26 25"><path class="ln" stroke-width="1.500" stroke-linejoin="round" d="M5.500 1.700h10.300l6.200 6V22q0 1.500-1.500 1.500h-15Q4 23.500 4 22V3.200Q4 1.700 5.500 1.700M15.200 2v6.200h6.600"/></svg>
      <h2 class="h-drop">Drop to upload your files</h2>
      <section class="readme">
        <div class="readme-bar d-flex align-items-center justify-content-between">
          <div class="readme-tab d-flex align-items-center sb"><svg class="i13 muted" style="margin-right:7px"><use href="#book"/></svg>README</div>
          <svg class="i13 muted"><use href="#pencil"/></svg>
        </div>
        <h1>Git-Version-Control-System-</h1>
        <p class="big mb-0" style="margin:15px 25px 0">Second Mini Project</p>
      </section>
    </div>
    <aside class="rightcol">
      <div class="d-flex justify-content-between" style="margin-top:1px"><h2 class="side-h">About</h2><svg class="muted" width="13" height="13" style="margin-top:2px;margin-right:-1px"><use href="#gear"/></svg></div>
      <p class="big" style="margin:15px 0 10px">Second Mini Project</p>
      <div class="side-l"><svg class="i13"><use href="#book"/></svg>Readme</div>
      <div class="side-l"><svg class="i13"><use href="#pulse"/></svg>Activity</div>
      <div class="side-l"><svg class="i13"><use href="#star"/></svg>0 stars</div>
      <div class="side-l"><svg class="i13" style="margin-top:2px"><use href="#eye"/></svg>0 watching</div>
      <div class="side-l"><svg class="i13" style="margin-top:2px"><use href="#fork"/></svg>0 forks</div>
      <h2 class="side-h" style="margin-top:-1px">Releases</h2>
      <div class="tiny muted" style="margin-top:14px">No releases published</div>
      <div class="tiny" style="height:15px;margin-top:1px"><a class="ul">Create a new release</a></div>
      <h2 class="side-h" style="margin-top:-1px">Packages</h2>
      <div class="tiny muted" style="margin-top:14px">No packages published</div>
      <div class="tiny"><a class="ul">Publish your first package</a></div>
    </aside>
  </div>
</main>
<footer class="foot"><svg width="18" height="18"><use href="#gh"/></svg><span style="letter-spacing:-.2px">© 2025 GitHub, Inc.</span><span>Terms</span><span>Privacy</span><span>Security</span><span>Status</span><span>Docs</span><span>Contact</span><span>Manage cookies</span><span>Do not share my personal information</span></footer>

<svg class="arrow" width="230" height="310" viewBox="0 0 230 310"><path fill="#ed1c24" d="m12.300 9 1.300-.8L211.500 278l3.500-2 4 23-20.300-11.700 4.300-2.300Z"/></svg>

<!-- notification balloon -->
<div class="note d-flex">
  <div class="ntext">
    <div class="nrow"><svg width="14" height="14"><use href="#info"/></svg><div class="w1"><span>Cannot conta</span><span>re for more information.</span></div></div>
    <div class="nrow"><svg width="14" height="16" viewBox="0 0 14 16"><circle cx="7" cy="5.500" r="5" fill="#f3ee22" stroke="#6b6a20"/><path fill="#222" d="M6.200 2h1.600v4.500H6.200zM6.200 7.500h1.600V9H6.200zM5 11h4v1H5zM5 13h4v1H5zM6 14.500h2v1H6z"/></svg><div class="w2 sb"><span>SharePoint W</span><span>e in your system settings</span></div></div>
    <div class="nrow"><svg width="14" height="14"><use href="#info"/></svg><div class="w3 sb"><span>Please enable</span><span>unt to avoid data loss</span></div></div>
  </div>
  <div class="flex-fill d-flex flex-column">
    <div class="nclose d-flex align-items-center justify-content-center"><svg width="7" height="7"><use href="#x"/></svg></div>
    <div class="position-relative mt-auto mb-1 mx-auto"><svg width="16" height="16"><use href="#shot"/></svg><b class="position-absolute top-0 start-0 w-100 text-center" style="color:#d9640a;font-size:13px">S</b></div>
  </div>
</div>

<!-- tray flyout -->
<div class="tray">
  <svg width="16" height="16" viewBox="0 0 16 16"><path fill="#808080" stroke="#111" d="M1.500.5h13v10h-13z"/><path fill="#aaa" stroke="#222" d="M1 12.500h5V15H1zM9 12.500h5V15H9z"/></svg>
  <svg width="16" height="16" viewBox="0 0 16 16"><g fill="none" stroke="#fff" stroke-width="1.200"><rect x="3" y="4.500" width="7" height="7" rx="1.500"/><path d="m10 7.500 3-2v5l-3-2M5 1.500Q8 0 11 1.500M5 14.500Q8 16 11 14.500"/></g></svg>
  <svg width="17" height="17" viewBox="0 0 17 17"><path fill="#fff" stroke="#111" d="M8 .7Q11 2.500 15 2.500 15.500 12 8 16 .5 12 1 2.500 5 2.500 8 .7Z"/><path stroke="#111" d="M8 1v14M1.500 8H15"/><path fill="#ffc20e" d="m11.500 7 5.200 9.500H6.800z"/><path stroke="#222" stroke-width="1.300" d="M11.600 10v3M11.600 14v1.300"/></svg>
  <svg width="16" height="16" viewBox="0 0 16 16"><path fill="#dfe6f2" d="M9 9h7v7z"/><circle cx="8" cy="8" r="6.500" fill="#28407e" stroke="#d5ddec" stroke-width="2.400"/><circle cx="8" cy="8" r="2" fill="#9db6e4"/></svg>
  <svg width="16" height="16" viewBox="0 0 16 16"><path fill="#e9e9ee" d="M3 1h10v5H3z"/><path fill="#a9a6b8" d="M0 5h16v6H0z"/><path fill="#635d79" d="M2 9h12v2H2z"/><path fill="#f2edfb" d="M4 10h8v6H4z"/></svg>
  <svg width="16" height="16" viewBox="0 0 16 16"><path fill="#18dc35" stroke="#0d7f20" d="m8 0 8 15.500H0z"/><path fill="#d4ffd8" d="M8 5v7h4z"/><path fill="#0b7620" d="M8 5v7H4z"/></svg>
  <svg width="16" height="15" viewBox="0 0 16 15"><path fill="#2d8a35" d="m0 8 10-4 6 4-9 6-7-4z"/><path fill="#e5b81c" d="m0 6 10-4 6 4-9 6-7-4z"/><path fill="#cf382e" d="m0 4.500 9-3 6 3-8 4.500-7-3z"/><path fill="#a9c83a" d="m2 4.500 7-3 4 2-7 3z"/></svg>
  <span class="hot"><svg width="14" height="16" viewBox="0 0 14 16" style="margin-right:3px"><path fill="#fff" d="M1 0h4l2 3 2-3h4v9l1 6-4-2-3-3-3 3-4 2 1-6z"/></svg></span>
  <svg width="16" height="14" viewBox="0 0 16 14"><path fill="#9dbbd5" d="M4 12a3.500 3.500 0 0 1-.5-6.500 4.500 4.500 0 0 1 8-.5A3.600 3.600 0 0 1 13 12z"/><path stroke="#fff" stroke-width="1.200" d="m1 1 14 12"/></svg>
  <span class="n30">30</span>
  <span class="position-relative"><svg width="16" height="16"><use href="#shot"/></svg><b class="position-absolute top-0 start-0 w-100 text-center" style="color:#d9640a;font-size:13px">S</b></span>
</div>
<div class="wm"><div class="wm1">Activate Windows</div><div class="wm2">Go to Settings to activate Windows.</div></div>

<!-- taskbar -->
<div class="task d-flex align-items-start">
  <svg width="16" height="16" viewBox="0 0 16 16" style="margin:12px 16px 0 16px"><path fill="#fff" d="m0 1.500 6.500-1V8H0zM7.500.3 16-1v9H7.500z"/></svg>
  <div class="tsearch d-flex"><svg width="14" height="14" viewBox="0 0 14 14"><circle class="ln" stroke-width="1.300" cx="7" cy="6" r="5"/></svg><span>Type here to search</span></div>
  <div class="ticons">
    <svg width="18" height="24" viewBox="0 0 18 24" style="margin-right:10px"><path class="ln" stroke-width="1.200" d="M3 4v2.500h10V4M16.500 4v2M3 10h10v8H3z"/></svg>
    <svg width="24" height="24" viewBox="0 0 24 24"><path d="m12 2 10 5.500v11L12 24 2 18.500v-11z"/></svg>
    <svg width="22" height="24" viewBox="0 0 22 24"><path fill="#e8a317" d="M0 3h9l2 3h11v15H0z"/><path fill="#ffd869" d="M0 6h22v15H0z"/></svg>
    <svg width="24" height="24" viewBox="0 0 24 24"><circle cx="12" cy="12" r="12" fill="#1c8bd2"/><path fill="#4bcf6c" d="M12 0a12 12 0 0 1 12 12H13z"/><path fill="#35b9dc" d="M2 6a12 12 0 0 1 17-4l-4 6z"/></svg>
    <svg width="24" height="24" viewBox="0 0 24 24"><path d="M0 7h24v17H0z"/><path class="ln" stroke-width="1.500" d="M8 8V3q4-5 8 0v5"/><path class="ln" stroke="#2a4150" d="M9 12V5q3-4 6 0v7"/></svg>
    <svg width="24" height="24" viewBox="0 0 24 24"><circle class="ln" stroke="#25d366" stroke-width="2.500" cx="12" cy="12" r="10.500"/><path fill="#25d366" d="M7 7h3v4H7z"/></svg>
    <svg width="18" height="24" viewBox="0 0 18 24"><path fill="#47403f" d="M0 3h18v18H0z"/></svg>
    <svg width="22" height="24" viewBox="0 0 22 24"><path fill="#1a3764" stroke="#dbe7f3" stroke-width="1.500" d="m11 1 9 3.500v12L11 22l-9-5.500v-12z"/><path class="ln" stroke="#dbe7f3" stroke-width="1.500" d="m2 4.500 9 4 9-4M11 8.500V20"/></svg>
    <svg width="18" height="24" viewBox="0 0 18 24"><path fill="#4a8cf7" d="M0 0h8.500v20H0z"/><path fill="#ffc60b" d="M10 0h8v20h-8z"/></svg>
    <svg width="22" height="24" viewBox="0 0 22 24"><path fill="#f17171" d="m11 0 10 10-4 4L7 4z"/><path fill="#8ad38b" d="m16 5 5 5-3 3-5-5z"/><path stroke="#fff" d="m9 2 8 8"/><path fill="#649be8" d="m6 5 5 5-6 5-4-4z"/></svg>
    <svg width="24" height="24" viewBox="0 0 24 24"><circle cx="12" cy="12" r="12" fill="#e94235"/><path fill="#ffc107" d="M12 7h11a12 12 0 0 1-7 16z"/><path fill="#2c9c4b" d="m1 7 5 8 4 9A12 12 0 0 1 1 7z"/><circle cx="12" cy="12" r="5.500" fill="#fff"/></svg>
    <svg width="22" height="24" viewBox="0 0 22 24"><path fill="#f17171" d="m11 0 10 10-4 4L7 4z"/><path fill="#8ad38b" d="m16 5 5 5-3 3-5-5z"/><path stroke="#fff" d="m9 2 8 8"/><path fill="#649be8" d="m6 5 5 5-6 5-4-4z"/></svg>
    <svg width="20" height="24" viewBox="0 0 20 24"><rect y="1" width="20" height="20" rx="4" fill="#b30b00"/><path class="ln" stroke-width="1.300" d="M9 12q0-8 1.500-8T12 12"/></svg>
    <svg width="24" height="24" viewBox="0 0 24 24"><path fill="#2489ca" d="M17 0 24 3v18l-7 3L4 11z"/><path fill="#1070b3" d="m0 6 3-2 14 14v6z"/></svg>
    <svg width="24" height="24" viewBox="0 0 24 24" style="margin-left:20px"><path fill="#199fd9" d="M2 3h6v20H2z"/><path fill="#4cc5f2" d="m16 0 6 12v12H10V12z"/></svg>
  </div>
  <div class="ms-auto d-flex align-items-start clock">
    <svg width="138" height="16" viewBox="0 0 138 16" style="margin-right:10px"><path fill="#fff" d="M1 15h6v1H1zM91 15h4v1h-4z"/><path class="ln" stroke="#fff" d="m131 16 2-2v2M136 14.500l1 1.500"/></svg>
    <span style="margin-top:4px;margin-right:28px">ENG</span><span style="margin-top:3px;letter-spacing:-.7px">11:19</span>
    <svg width="16" height="16" viewBox="0 0 16 16" style="margin:0 25px 0 34px"><path class="ln" stroke-width="1.300" d="M0 12.500h15V20H0z"/></svg>
  </div>
</div>
<script src="https://cdn.jsdelivr.net/npm/bootstrap@5.3.0/dist/js/bootstrap.bundle.min.js"></script>
</body>
</html>
